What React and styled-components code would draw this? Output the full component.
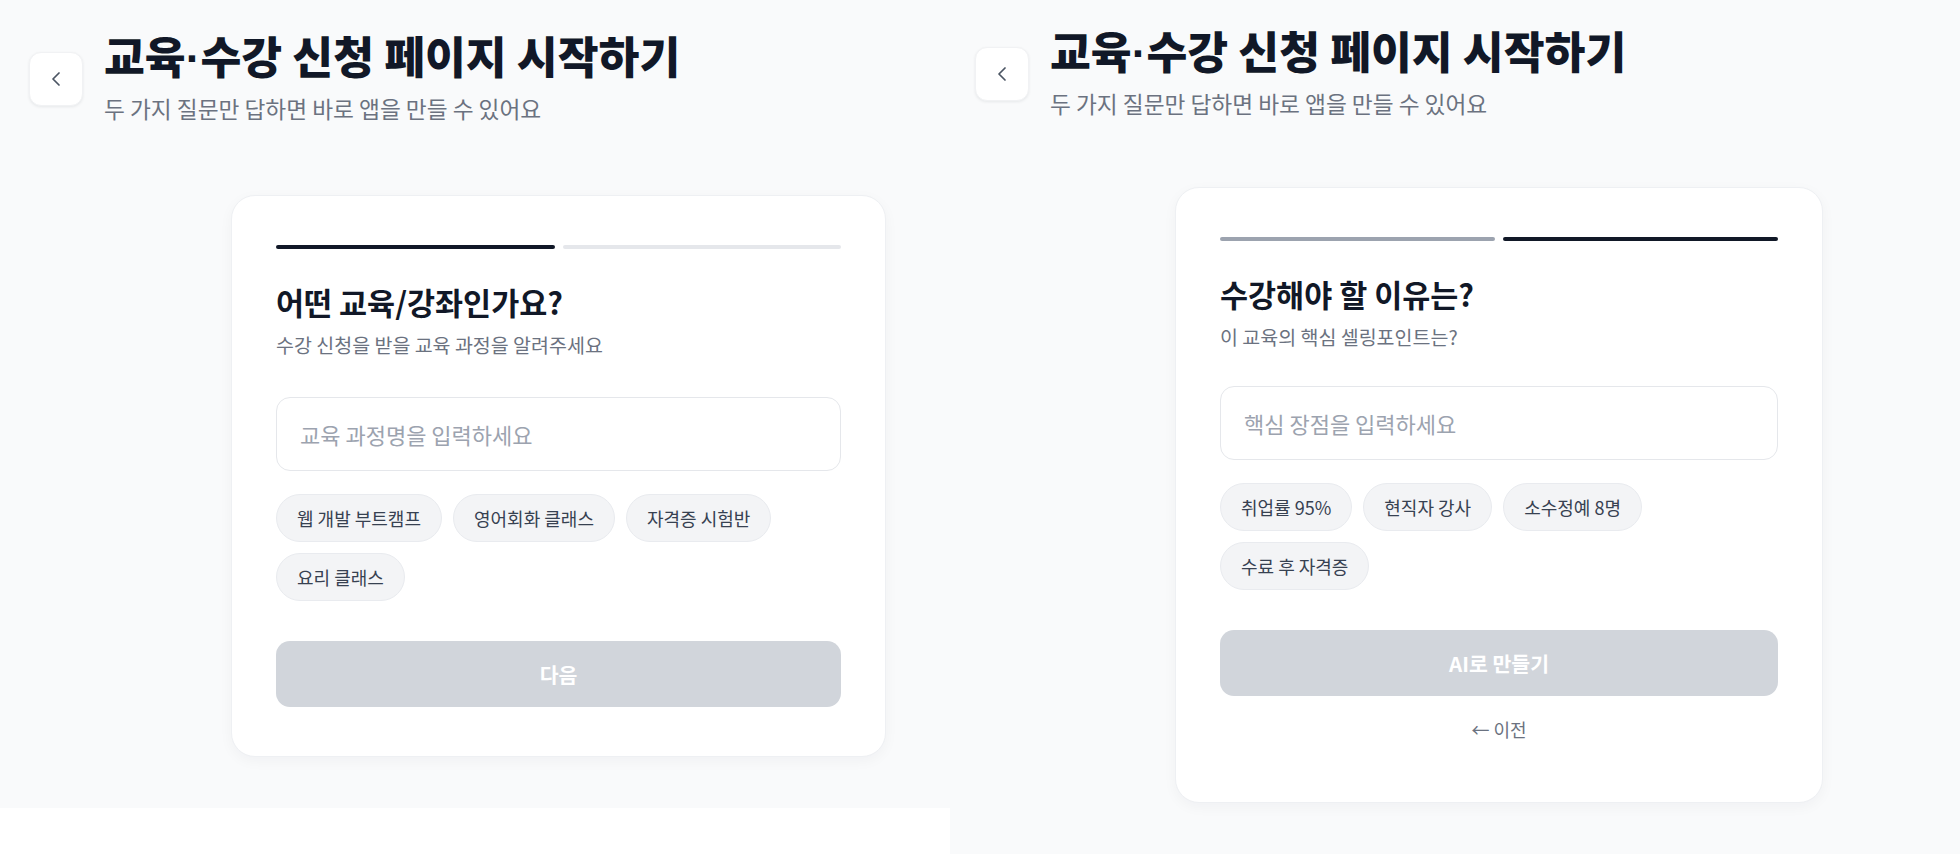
import React from "react";
import styled, { createGlobalStyle } from "styled-components";
import { ChevronLeft } from "lucide-react";

const GlobalStyle = createGlobalStyle`
  body {
    margin: 0;
    background: #ffffff;
    font-family: "Noto Sans CJK KR", "Noto Sans", sans-serif;
  }
  * {
    box-sizing: border-box;
  }
`;

const steps = [
  {
    key: "course",
    panelWidth: 950,
    panelHeight: 808,
    pageWidth: 1117,
    padTop: 30,
    padLeft: 29,
    cardWidth: 655,
    cardGap: 71,
    inputGap: 39,
    progress: ["active", "todo"],
    title: "어떤 교육/강좌인가요?",
    desc: "수강 신청을 받을 교육 과정을 알려주세요",
    placeholder: "교육 과정명을 입력하세요",
    chips: ["웹 개발 부트캠프", "영어회화 클래스", "자격증 시험반", "요리 클래스"],
    action: "다음",
    showPrev: false,
  },
  {
    key: "reason",
    panelWidth: 1010,
    panelHeight: 854,
    pageWidth: 1098,
    padTop: 25,
    padLeft: 25,
    cardWidth: 648,
    cardGap: 68,
    inputGap: 36,
    progress: ["done", "active"],
    title: "수강해야 할 이유는?",
    desc: "이 교육의 핵심 셀링포인트는?",
    placeholder: "핵심 장점을 입력하세요",
    chips: ["취업률 95%", "현직자 강사", "소수정예 8명", "수료 후 자격증"],
    action: "AI로 만들기",
    showPrev: true,
  },
];

const App = () => {
  return (
    <>
      <GlobalStyle />
      <Screen>
        {steps.map((step) => (
          <Panel key={step.key} $width={step.panelWidth} $height={step.panelHeight}>
            <Page $width={step.pageWidth}>
              <Header $top={step.padTop} $left={step.padLeft}>
                <BackButton type="button">
                  <ChevronLeft size={24} strokeWidth={1.75} color="#4b5563" />
                </BackButton>
                <HeaderText>
                  <PageTitle>
                    교육<Dot>·</Dot>수강 신청 페이지 시작하기
                  </PageTitle>
                  <PageSub>두 가지 질문만 답하면 바로 앱을 만들 수 있어요</PageSub>
                </HeaderText>
              </Header>

              <Card $width={step.cardWidth} $gap={step.cardGap}>
                <Progress>
                  {step.progress.map((state, idx) => (
                    <Segment key={idx} $state={state} />
                  ))}
                </Progress>
                <Question>{step.title}</Question>
                <Hint>{step.desc}</Hint>
                <TextInput placeholder={step.placeholder} $gap={step.inputGap} />
                <Chips>
                  {step.chips.map((chip) => (
                    <Chip key={chip} type="button">
                      {chip}
                    </Chip>
                  ))}
                </Chips>
                <SubmitButton type="button" disabled>
                  {step.action}
                </SubmitButton>
                {step.showPrev && <PrevLink type="button">← 이전</PrevLink>}
              </Card>
            </Page>
          </Panel>
        ))}
      </Screen>
    </>
  );
};

export default App;

const Screen = styled.div`
  display: flex;
  align-items: flex-start;
  width: 1960px;
  height: 856px;
  overflow: hidden;
`;

const Panel = styled.section`
  flex: none;
  width: ${(p) => p.$width}px;
  height: ${(p) => p.$height}px;
  overflow: hidden;
  background: #f9fafb;
`;

const Page = styled.div`
  width: ${(p) => p.$width}px;
`;

const Header = styled.header`
  display: flex;
  align-items: flex-start;
  gap: 21px;
  padding: ${(p) => p.$top}px 0 0 ${(p) => p.$left}px;
`;

const BackButton = styled.button`
  flex: none;
  width: 54px;
  height: 54px;
  margin-top: 22px;
  display: flex;
  align-items: center;
  justify-content: center;
  background: #ffffff;
  border: 1px solid #f1f2f4;
  border-radius: 12px;
  box-shadow: 0 1px 3px rgba(15, 23, 42, 0.08);
  padding: 0;
`;

const HeaderText = styled.div`
  display: flex;
  flex-direction: column;
`;

const PageTitle = styled.h1`
  margin: 0;
  height: 50px;
  font-size: 44.4px;
  line-height: 50px;
  font-weight: 800;
  color: #111827;
  white-space: nowrap;
`;

const Dot = styled.span`
  font-family: "Liberation Sans", sans-serif;
  font-weight: 700;
  line-height: 0;
`;

const PageSub = styled.p`
  margin: 14px 0 0;
  font-size: 22.7px;
  line-height: 30px;
  color: #6b7280;
`;

const Card = styled.div`
  width: ${(p) => p.$width}px;
  margin: ${(p) => p.$gap}px auto 0;
  padding: 49px 44px;
  background: #ffffff;
  border: 1px solid #eef0f3;
  border-radius: 24px;
  box-shadow: 0 4px 14px rgba(15, 23, 42, 0.04);
  display: flex;
  flex-direction: column;
`;

const Progress = styled.div`
  display: flex;
  gap: 8px;
`;

const segmentColors = {
  active: "#111827",
  done: "#9ca3af",
  todo: "#e5e7eb",
};

const Segment = styled.div`
  flex: 1;
  height: 4px;
  border-radius: 999px;
  background: ${(p) => segmentColors[p.$state]};
`;

const Question = styled.h2`
  margin: 35px 0 0;
  font-size: 30.5px;
  line-height: 36px;
  font-weight: 700;
  color: #111827;
`;

const Hint = styled.p`
  margin: 12px 0 0;
  font-size: 19.5px;
  line-height: 26px;
  color: #6b7280;
`;

const TextInput = styled.input`
  margin-top: ${(p) => p.$gap}px;
  width: 100%;
  height: 74px;
  padding: 0 23px;
  border: 1.5px solid #e5e7eb;
  border-radius: 14px;
  background: #ffffff;
  font-family: inherit;
  font-size: 22px;
  color: #111827;
  outline: none;

  &::placeholder {
    color: #9ca3af;
  }
`;

const Chips = styled.div`
  margin-top: 23px;
  display: flex;
  flex-wrap: wrap;
  gap: 11px;
`;

const Chip = styled.button`
  height: 48px;
  padding: 0 20px;
  border: 1px solid #e9ebef;
  border-radius: 999px;
  background: #f3f4f6;
  font-family: inherit;
  font-size: 18px;
  color: #374151;
`;

const SubmitButton = styled.button`
  margin-top: 40px;
  width: 100%;
  height: 66px;
  border: none;
  border-radius: 14px;
  background: #d1d5db;
  font-family: inherit;
  font-size: 20.5px;
  font-weight: 700;
  color: #ffffff;
`;

const PrevLink = styled.button`
  margin-top: 13px;
  align-self: center;
  padding: 8px 0 12px;
  border: none;
  background: none;
  font-family: inherit;
  font-size: 18px;
  line-height: 24px;
  color: #6b7280;
`;
